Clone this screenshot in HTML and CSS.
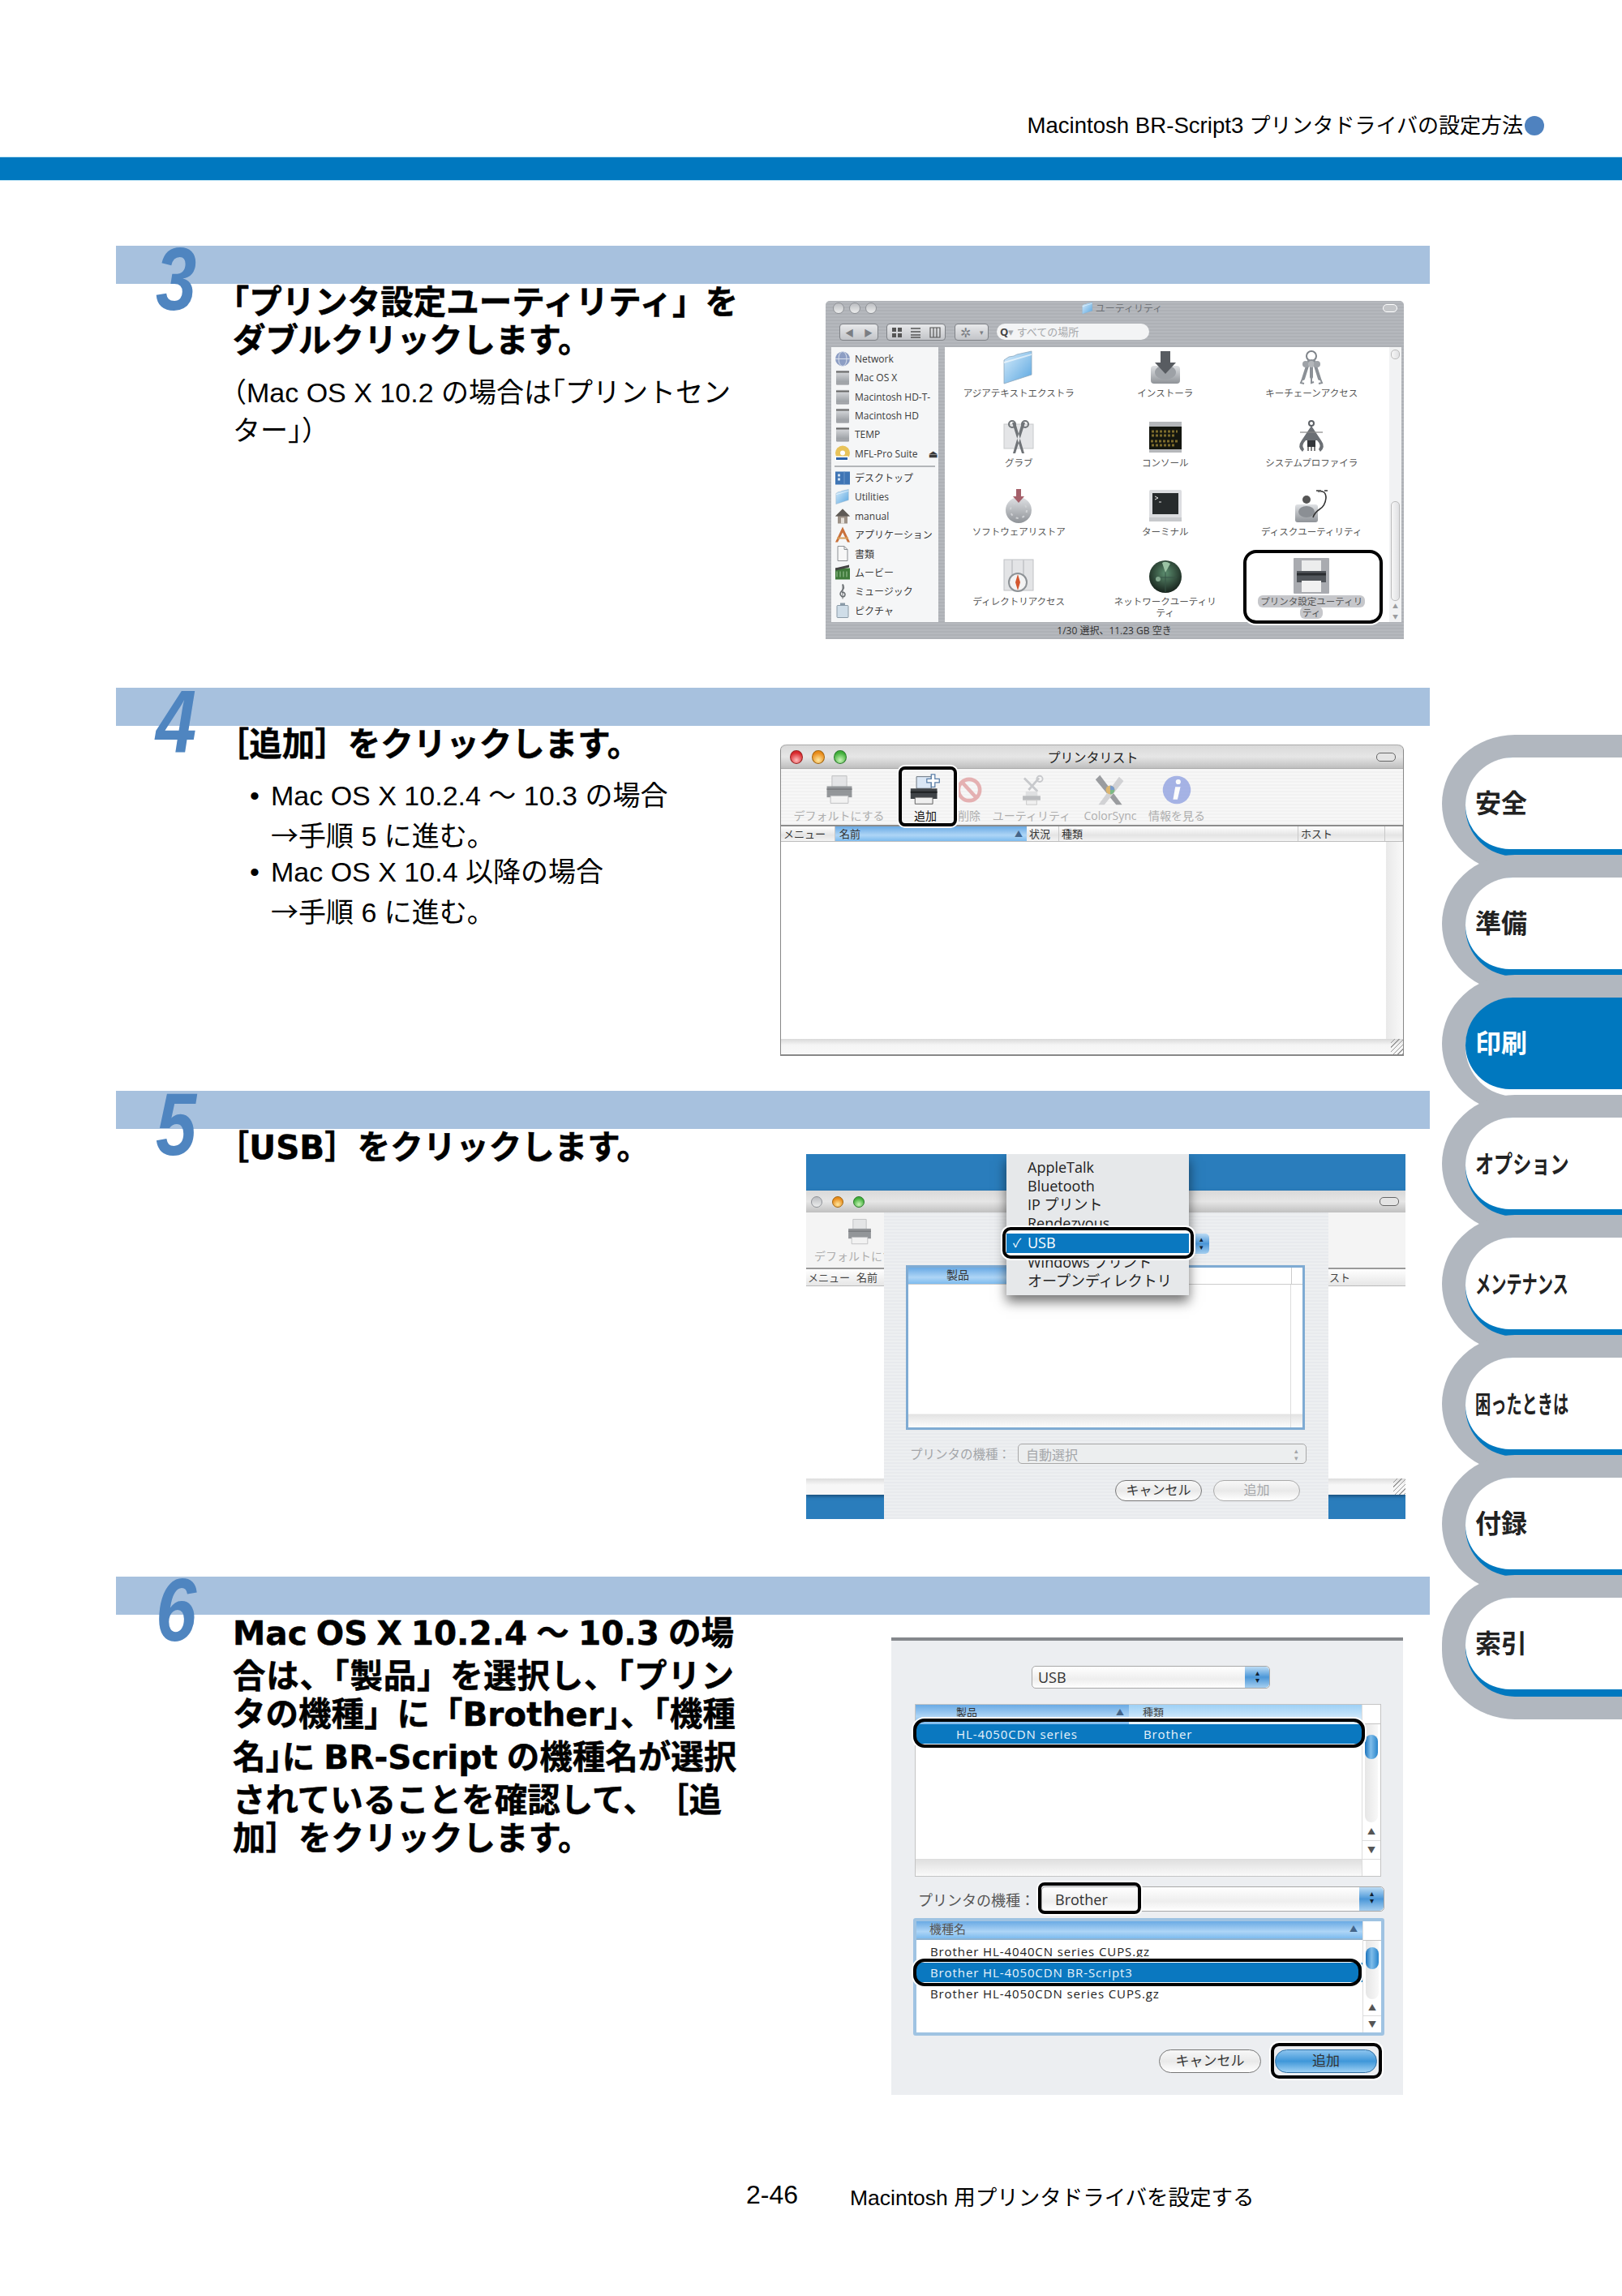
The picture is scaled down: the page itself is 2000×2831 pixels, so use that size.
FILE: index.html
```html
<!DOCTYPE html>
<html lang="ja">
<head>
  <meta charset="UTF-8" />
  <title>Macintosh BR-Script3 プリンタドライバの設定方法</title>
  <link rel="stylesheet" href="styles.css">
</head>
<body>

  <svg class="defs" xmlns="http://www.w3.org/2000/svg">
    <defs>
      <linearGradient id="gFolder" x1="0" y1="0" x2="1" y2="1"><stop offset="0" stop-color="#d6ecfb"/><stop offset="1" stop-color="#5aa6e0"/></linearGradient>
      <linearGradient id="gDisk" x1="0" y1="0" x2="0" y2="1"><stop offset="0" stop-color="#dfe1e4"/><stop offset="1" stop-color="#8f9398"/></linearGradient>
      <radialGradient id="gNet" cx=".5" cy=".4" r=".6"><stop offset="0" stop-color="#5d8f70"/><stop offset="1" stop-color="#17231c"/></radialGradient>

      <symbol id="ic-folder" viewBox="0 0 44 44"><path d="M4 13L10 9 16 8 20 6 38 2V31L4 42Z" fill="url(#gFolder)" stroke="#8aa6bd" stroke-width=".8"/><path d="M4 15L38 5V7L4 17Z" fill="#fff" opacity=".6"/></symbol>
      <symbol id="ic-install" viewBox="0 0 44 44"><rect x="4" y="20" width="36" height="22" rx="4" fill="url(#gDisk)"/><ellipse cx="22" cy="28" rx="13" ry="9" fill="#9da1a6"/><path d="M16 2H28V16H35L22 30 9 16H16Z" fill="#585c61"/></symbol>
      <symbol id="ic-keys" viewBox="0 0 44 44"><circle cx="22" cy="8" r="6" fill="none" stroke="#7d8288" stroke-width="2"/><path d="M19 14L12 36M22 14V34M25 14L32 36" stroke="#8b9096" stroke-width="4" stroke-linecap="round"/><circle cx="15" cy="18" r="4" fill="#9ea2a7"/><circle cx="22" cy="18" r="4" fill="#b3b6ba"/><circle cx="29" cy="18" r="4" fill="#9ea2a7"/><path d="M11 36l-2 5 4 1M22 34v7l3-1M33 36l2 5-4 1" fill="none" stroke="#8b9096" stroke-width="2"/></symbol>
      <symbol id="ic-grab" viewBox="0 0 44 44"><rect x="4" y="6" width="36" height="30" fill="#e4e5e7" stroke="#c8cacc"/><path d="M14 4L26 42 29 42 18 4ZM30 4L18 42 15 42 26 4Z" fill="#6f7377"/><circle cx="14" cy="6" r="4" fill="none" stroke="#6f7377" stroke-width="2"/><circle cx="30" cy="6" r="4" fill="none" stroke="#6f7377" stroke-width="2"/></symbol>
      <symbol id="ic-console" viewBox="0 0 44 44"><rect x="2" y="3" width="40" height="38" fill="#b5b7ba"/><rect x="2" y="9" width="40" height="28" fill="#14160f"/><path d="M5 15h32M5 20h30M4 27h35M5 32h28" stroke="#7c6b2c" stroke-width="3" stroke-dasharray="3 2"/></symbol>
      <symbol id="ic-sysprof" viewBox="0 0 44 44"><path d="M22 8L34 26Q40 34 33 40L31 37Q35 32 29 26H15Q9 32 13 37L11 40Q4 34 10 26Z" fill="#6b6f74"/><circle cx="22" cy="5" r="3" fill="none" stroke="#5c6065" stroke-width="2"/><rect x="17" y="26" width="10" height="8" fill="#33363a"/><path d="M18 34v5M22 34v5M26 34v5" stroke="#555" stroke-width="1.5"/><path d="M8 16H36" stroke="#888" stroke-width="1.2"/></symbol>
      <symbol id="ic-update" viewBox="0 0 44 44"><circle cx="22" cy="27" r="16" fill="url(#gDisk)"/><circle cx="22" cy="27" r="10" fill="none" stroke="#cfd1d4" stroke-dasharray="3 5" stroke-width="2"/><path d="M19 1H25V10H29L22 18 15 10H19Z" fill="#a5606a"/></symbol>
      <symbol id="ic-term" viewBox="0 0 44 44"><rect x="2" y="2" width="40" height="38" rx="2" fill="#dcdde0"/><rect x="6" y="6" width="32" height="26" fill="#272b2c"/><path d="M9 10l4 2-4 2M14 17h3" stroke="#e6e6e6" fill="none"/><rect x="2" y="36" width="40" height="5" fill="#c7c9cc"/></symbol>
      <symbol id="ic-disk" viewBox="0 0 44 44"><rect x="2" y="20" width="28" height="22" rx="3" fill="url(#gDisk)"/><ellipse cx="16" cy="29" rx="10" ry="7" fill="#8b8f94"/><circle cx="16" cy="14" r="5" fill="#555"/><path d="M30 4Q40 2 40 12 39 22 32 26 26 30 24 36" fill="none" stroke="#333" stroke-width="1.6"/><path d="M28 3l6 0M38 3l4 0" stroke="#666" stroke-width="2"/></symbol>
      <symbol id="ic-dir" viewBox="0 0 44 44"><rect x="4" y="2" width="36" height="38" fill="#e3e4e6" stroke="#c0c2c5"/><path d="M14 2V40M28 2V40" stroke="#c9cbce" stroke-width="2"/><circle cx="21" cy="30" r="11" fill="#f3f3f3" stroke="#8d9296" stroke-width="2"/><path d="M21 20L24 30 21 40 18 30Z" fill="#d4572f"/></symbol>
      <symbol id="ic-net" viewBox="0 0 44 44"><circle cx="22" cy="23" r="20" fill="url(#gNet)"/><path d="M8 24L36 24M22 4V42" stroke="#375546" stroke-width="1"/><path d="M18 6Q22 3 28 7L22 18Z" fill="#9bc3a4"/><circle cx="13" cy="26" r="3" fill="#82a68d"/></symbol>
      <symbol id="ic-print" viewBox="0 0 44 44"><rect x="0" y="0" width="44" height="44" rx="1" fill="#a9abb0"/><path d="M10 3H34V16H10Z" fill="#eceded"/><path d="M4 16H40V30H4Z" fill="#52565b"/><path d="M4 20H40" stroke="#2a2d30" stroke-width="3"/><path d="M10 28H34V42H10Z" fill="#f1f1f1"/></symbol>
      <symbol id="ic-printer" viewBox="0 0 44 44"><path d="M12 3H32V18H12Z" fill="#dfe0e2" stroke="#a8a9ac"/><path d="M5 17H39V32H5Z" fill="#73777b"/><path d="M5 21H39" stroke="#55585c" stroke-width="2"/><path d="M10 30H34V40H10Z" fill="#f2f2f2" stroke="#a8a9ac"/></symbol>
      <symbol id="ic-printadd" viewBox="0 0 44 44"><path d="M10 4H30V20H10Z" fill="#dbe7f5" stroke="#5f6a75"/><path d="M2 20H38V34H2Z" fill="#3f4347"/><path d="M2 25H38" stroke="#1e2022" stroke-width="2"/><path d="M8 32H32V41H8Z" fill="#efefef" stroke="#555"/><path d="M30 1H35V7H41V12H35V18H30V12H24V7H30Z" fill="#fff" stroke="#5b7fa8" stroke-width="1.4"/></symbol>
      <symbol id="ic-stop" viewBox="0 0 44 44"><circle cx="22" cy="22" r="17" fill="none" stroke="#e09a9c" stroke-width="6"/><path d="M11 10L33 34" stroke="#e09a9c" stroke-width="6"/></symbol>
      <symbol id="ic-util" viewBox="0 0 44 44"><path d="M12 6L30 24M32 6L18 22" stroke="#b9bbbf" stroke-width="3"/><circle cx="33" cy="7" r="4" fill="none" stroke="#b9bbbf" stroke-width="2"/><path d="M14 24H30V32H14Z" fill="#d8d9db"/><path d="M10 30H34V36H10Z" fill="#a9abae"/><path d="M15 36H29V42H15Z" fill="#eeeeee" stroke="#bbb"/></symbol>
      <symbol id="ic-color" viewBox="0 0 44 44"><path d="M8 2L38 42H30L2 8Z" fill="#7d8084"/><path d="M34 4L6 42H14L40 10Z" fill="#c6c7ca"/><circle cx="22" cy="22" r="6" fill="#d3a247"/><path d="M22 16a6 6 0 0 1 6 6h-6Z" fill="#4f7fc0"/><path d="M22 22h6a6 6 0 0 1-6 6Z" fill="#54a765"/></symbol>
      <symbol id="ic-info" viewBox="0 0 44 44"><circle cx="22" cy="22" r="19" fill="#8b9de0"/><circle cx="24" cy="11" r="3.4" fill="#fff"/><path d="M20 18H27L23 35H17Z" fill="#fff"/></symbol>
      <symbol id="ic-globe" viewBox="0 0 20 20"><circle cx="10" cy="10" r="9" fill="#8d9ec4"/><ellipse cx="10" cy="10" rx="5" ry="9" fill="none" stroke="#d8dfec"/><path d="M1 10H19" stroke="#d8dfec"/></symbol>
      <symbol id="ic-hd" viewBox="0 0 20 20"><rect x="2" y="1" width="16" height="18" rx="1" fill="url(#gDisk)"/><rect x="2" y="2" width="16" height="2" fill="#666"/><rect x="2" y="16" width="16" height="2" fill="#a5a8ac"/></symbol>
      <symbol id="ic-disc" viewBox="0 0 20 20"><circle cx="10" cy="9" r="9" fill="#e8c35a"/><circle cx="10" cy="9" r="3" fill="#fff"/><rect x="1" y="13" width="16" height="6" fill="#fff"/><path d="M2 16H16" stroke="#2d62a8" stroke-width="3"/></symbol>
      <symbol id="ic-desk" viewBox="0 0 20 20"><rect x="1" y="2" width="18" height="16" fill="#3f75b5"/><path d="M4 5h3v3H4zM4 10h3v3H4z" fill="#cfe0f3"/><path d="M12 2v16" stroke="#6d97c8"/></symbol>
      <symbol id="ic-home" viewBox="0 0 20 20"><path d="M10 1L19 10H16V19H4V10H1Z" fill="#9c9187"/><path d="M10 1L19 10H1Z" fill="#5e5a56"/><rect x="8" y="12" width="4" height="7" fill="#e4dfd8"/></symbol>
      <symbol id="ic-app" viewBox="0 0 20 20"><path d="M10 0L19 19H16L10 7 4 19H1Z" fill="#c9703a"/><path d="M3 14H17" stroke="#d8a05c" stroke-width="2"/></symbol>
      <symbol id="ic-doc" viewBox="0 0 20 20"><path d="M4 1H12L16 5V19H4Z" fill="#f7f7f7" stroke="#8c8f93"/><path d="M12 1V5H16" fill="none" stroke="#8c8f93"/></symbol>
      <symbol id="ic-movie" viewBox="0 0 20 20"><rect x="1" y="5" width="18" height="14" fill="#3f7a3a"/><path d="M1 5L18 1V4L1 8Z" fill="#444"/><path d="M3 9v7M7 9v7M11 9v7M15 9v7" stroke="#a0c89b"/></symbol>
      <symbol id="ic-music" viewBox="0 0 20 20"><path d="M10 1Q13 5 9 9 5 13 9 16 13 17 13 13 12 10 9 11" fill="none" stroke="#6b6f73" stroke-width="1.6"/><path d="M10 1V19" stroke="#6b6f73"/></symbol>
      <symbol id="ic-pic" viewBox="0 0 20 20"><rect x="3" y="4" width="14" height="15" rx="1" fill="#cfdde8" stroke="#8a9aa7"/><rect x="7" y="1" width="6" height="3" fill="#8a9aa7"/></symbol>
    </defs>
  </svg>

  <header class="page-head">
    <span class="head-title"><span class="lat">Macintosh BR-Script3</span> プリンタドライバの設定方法</span>
    <span class="head-dot"></span>
  </header>
  <div class="head-bar"></div>

  <main class="page-main">
    <div class="steps">

      <!-- step 3 -->
      <section class="step step-3">
        <div class="step-bar"></div>
        <div class="step-num">3</div>
        <div class="step-body">
          <div class="step-text">
            <h2 class="step-head"><span class="ln">「プリンタ設定ユーティリティ」を</span><span class="ln">ダブルクリックします。</span></h2>
            <p class="note"><span class="ln">（Mac OS X 10.2 の場合は<span class="hw">「</span>プリントセン</span><span class="ln">ター」）</span></p>
          </div>

          <div class="win finder">
            <div class="fin-title">
              <div class="lights">
                <span class="light off"></span><span class="light off"></span><span class="light off"></span>
              </div>
              <div class="fin-name"><svg class="fin-name-ic"><use href="#ic-folder"/></svg>ユーティリティ</div>
              <span class="pill"></span>
            </div>
            <div class="fin-tools">
              <div class="tbtn nav-btn"><span>◀</span><span>▶</span></div>
              <div class="tbtn view-btn">
                <svg viewBox="0 0 14 14"><path d="M1 1h5v5H1zM8 1h5v5H8zM1 8h5v5H1zM8 8h5v5H8z" fill="#555"/></svg>
                <svg viewBox="0 0 14 14"><path d="M1 2h12M1 6h12M1 10h12M1 13h12" stroke="#555" stroke-width="1.4"/></svg>
                <svg viewBox="0 0 14 14"><path d="M1 1h12v12H1zM5 1v12M9 1v12" fill="none" stroke="#555" stroke-width="1.2"/></svg>
              </div>
              <div class="tbtn act-btn"><span>✲</span><small>▾</small></div>
              <div class="search"><span class="search-q">Q</span>▾ すべての場所</div>
            </div>
            <div class="fin-body">
              <ul class="side">
                <li><svg><use href="#ic-globe"/></svg>Network</li>
                <li><svg><use href="#ic-hd"/></svg>Mac OS X</li>
                <li><svg><use href="#ic-hd"/></svg>Macintosh HD-T-</li>
                <li><svg><use href="#ic-hd"/></svg>Macintosh HD</li>
                <li><svg><use href="#ic-hd"/></svg>TEMP</li>
                <li class="side-eject"><svg><use href="#ic-disc"/></svg>MFL-Pro Suite<b>⏏</b></li>
                <li class="side-sep"></li>
                <li><svg><use href="#ic-desk"/></svg>デスクトップ</li>
                <li><svg><use href="#ic-folder"/></svg>Utilities</li>
                <li><svg><use href="#ic-home"/></svg>manual</li>
                <li><svg><use href="#ic-app"/></svg>アプリケーション</li>
                <li><svg><use href="#ic-doc"/></svg>書類</li>
                <li><svg><use href="#ic-movie"/></svg>ムービー</li>
                <li><svg><use href="#ic-music"/></svg>ミュージック</li>
                <li><svg><use href="#ic-pic"/></svg>ピクチャ</li>
              </ul>
              <div class="fin-main">
                <div class="fin-grid">
                  <div class="cell"><svg><use href="#ic-folder"/></svg><span>アジアテキストエクストラ</span></div>
                  <div class="cell"><svg><use href="#ic-install"/></svg><span>インストーラ</span></div>
                  <div class="cell"><svg><use href="#ic-keys"/></svg><span>キーチェーンアクセス</span></div>
                  <div class="cell"><svg><use href="#ic-grab"/></svg><span>グラブ</span></div>
                  <div class="cell"><svg><use href="#ic-console"/></svg><span>コンソール</span></div>
                  <div class="cell"><svg><use href="#ic-sysprof"/></svg><span>システムプロファイラ</span></div>
                  <div class="cell"><svg><use href="#ic-update"/></svg><span>ソフトウェアリストア</span></div>
                  <div class="cell"><svg><use href="#ic-term"/></svg><span>ターミナル</span></div>
                  <div class="cell"><svg><use href="#ic-disk"/></svg><span>ディスクユーティリティ</span></div>
                  <div class="cell"><svg><use href="#ic-dir"/></svg><span>ディレクトリアクセス</span></div>
                  <div class="cell"><svg><use href="#ic-net"/></svg><span>ネットワークユーティリ<br>ティ</span></div>
                  <div class="cell cell-sel"><svg><use href="#ic-print"/></svg><span class="sel-label"><em>プリンタ設定ユーティリ</em><br><em>ティ</em></span></div>
                </div>
                <div class="vscroll">
                  <i class="thumb thumb-a"></i><i class="thumb thumb-b"></i><b>▲</b><b>▼</b>
                </div>
              </div>
            </div>
            <div class="fin-status">1/30 選択、11.23 GB 空き</div>
            <div class="mark mark-printer"></div>
          </div>
        </div>
      </section>

      <!-- step 4 -->
      <section class="step step-4">
        <div class="step-bar"></div>
        <div class="step-num">4</div>
        <div class="step-body">
          <div class="step-text">
            <h2 class="step-head"><span class="ln">［追加］をクリックします。</span></h2>
            <ul class="bullets">
              <li><span class="ln">Mac OS X 10.2.4 ～ 10.3 の場合</span><span class="ln"><span class="arrow">→</span>手順 5 に進む。</span></li>
              <li><span class="ln">Mac OS X 10.4 以降の場合</span><span class="ln"><span class="arrow">→</span>手順 6 に進む。</span></li>
            </ul>
          </div>

          <div class="win plist">
            <div class="pl-title">
              <div class="lights lights-big">
                <span class="light red"></span><span class="light amber"></span><span class="light green"></span>
              </div>
              <div class="pl-name">プリンタリスト</div>
              <span class="pill"></span>
            </div>
            <div class="pl-tools">
              <div class="tool off t1"><svg><use href="#ic-printer"/></svg><span>デフォルトにする</span></div>
              <div class="tool t2"><svg><use href="#ic-printadd"/></svg><span>追加</span></div>
              <div class="tool off t3"><svg><use href="#ic-stop"/></svg><span>削除</span></div>
              <div class="tool off t4"><svg><use href="#ic-util"/></svg><span>ユーティリティ</span></div>
              <div class="tool off t5"><svg><use href="#ic-color"/></svg><span>ColorSync</span></div>
              <div class="tool off t6"><svg><use href="#ic-info"/></svg><span>情報を見る</span></div>
            </div>
            <div class="pl-head">
              <span>メニュー</span><span class="col-on">名前<b>▲</b></span><span>状況</span><span>種類</span><span>ホスト</span><span></span>
            </div>
            <div class="pl-content"><div class="pl-side"></div></div>
            <div class="pl-bottom"><span class="grip"></span></div>
            <div class="mark mark-add"></div>
          </div>
        </div>
      </section>

      <!-- step 5 -->
      <section class="step step-5">
        <div class="step-bar"></div>
        <div class="step-num">5</div>
        <div class="step-body">
          <div class="step-text">
            <h2 class="step-head"><span class="ln">［USB］をクリックします。</span></h2>
          </div>

          <div class="win usbshot">
            <div class="back-win">
              <div class="back-title">
                <div class="lights lights-back">
                  <span class="light off"></span><span class="light amber"></span><span class="light green"></span>
                </div>
                <span class="pill"></span>
              </div>
              <div class="back-tools">
                <div class="tool off back-tool"><svg><use href="#ic-printer"/></svg><span>デフォルトにする</span></div>
              </div>
              <div class="back-head"><span>メニュー</span><span>名前</span><span class="back-host">スト</span></div>
              <div class="back-content"></div>
              <div class="back-bottom"><span class="grip"></span></div>
            </div>

            <div class="sheet">
              <div class="lst lst-a">
                <div class="lst-a-head"><span class="col-on">製品</span><span></span><span></span></div>
                <div class="lst-a-body"><div class="lst-a-blank"></div></div>
              </div>
              <div class="sheet-row">
                <label class="dim-label">プリンタの機種：</label>
                <div class="select dim"><span>自動選択</span><i>▴<br>▾</i></div>
              </div>
              <div class="btn-row">
                <div class="mac-btn">キャンセル</div>
                <div class="mac-btn dim">追加</div>
              </div>
            </div>

            <div class="menu">
              <div class="menu-item">AppleTalk</div>
              <div class="menu-item">Bluetooth</div>
              <div class="menu-item">IP プリント</div>
              <div class="menu-item">Rendezvous</div>
              <div class="menu-item menu-on"><span class="check">✓</span>USB</div>
              <div class="menu-item">Windows プリント</div>
              <div class="menu-item">オープンディレクトリ</div>
              <div class="mark mark-usb"></div>
            </div>
            <div class="stepper stepper-usb">▴<br>▾</div>
          </div>
        </div>
      </section>

      <!-- step 6 -->
      <section class="step step-6">
        <div class="step-bar"></div>
        <div class="step-num">6</div>
        <div class="step-body">
          <div class="step-text">
            <h2 class="step-head">
              <span class="ln">Mac OS X 10.2.4 ～ 10.3 の場</span>
              <span class="ln gap ln-wide">合は、「製品」を選択し、「プリン</span>
              <span class="ln">タの機種」に「Brother」、「機種</span>
              <span class="ln gap">名<span class="hw">」</span>に BR-Script の機種名が選択</span>
              <span class="ln gap ln-full">されていることを確認して、［追</span>
              <span class="ln">加］をクリックします。</span>
            </h2>
          </div>

          <div class="win addshot">
            <div class="select sel-usb"><span>USB</span><i class="stepper">▴<br>▾</i></div>

            <div class="lst lst-b">
              <div class="lst-main">
                <div class="lst-head"><span class="col-on col-b">製品<b>▲</b></span><span class="col-light">種類</span></div>
                <div class="lst-row row-on"><span class="c1">HL-4050CDN series</span><span>Brother</span></div>
                <div class="lst-blank"></div>
                <div class="lst-foot"></div>
              </div>
              <div class="lst-scroll">
                <div class="scroll-corner"></div>
                <div class="scroll-track"><i class="scroll-thumb"></i></div>
                <div class="scroll-arrows"><b>▲</b><b>▼</b></div>
                <div class="scroll-corner small"></div>
              </div>
            </div>

            <div class="kind-row">
              <label class="kind-label">プリンタの機種：</label>
              <div class="select sel-kind"><span>Brother</span><i class="stepper">▴<br>▾</i></div>
            </div>

            <div class="lst lst-c">
              <div class="lst-main">
                <div class="lst-head head-c"><span class="col-on col-c">機種名<b>▲</b></span></div>
                <div class="lst-row">Brother HL-4040CN series CUPS.gz</div>
                <div class="lst-row row-on">Brother HL-4050CDN BR-Script3</div>
                <div class="lst-row">Brother HL-4050CDN series CUPS.gz</div>
              </div>
              <div class="lst-scroll">
                <div class="scroll-corner"></div>
                <div class="scroll-track"><i class="scroll-thumb thumb-c"></i></div>
                <div class="scroll-arrows"><b>▲</b><b>▼</b></div>
              </div>
            </div>

            <div class="btn-row btn-row-add">
              <div class="mac-btn">キャンセル</div>
              <div class="mac-btn primary">追加</div>
            </div>

            <div class="mark mark-row1"></div>
            <div class="mark mark-kind"></div>
            <div class="mark mark-row2"></div>
            <div class="mark mark-ok"></div>
          </div>
        </div>
      </section>
    </div>

    <nav class="rail">
      <div class="tab"><div class="tab-in"><div class="tab-face">安全</div></div></div>
      <div class="tab"><div class="tab-in"><div class="tab-face">準備</div></div></div>
      <div class="tab tab-on"><div class="tab-in"><div class="tab-face">印刷</div></div></div>
      <div class="tab"><div class="tab-in"><div class="tab-face"><span class="sq sq-5">オプション</span></div></div></div>
      <div class="tab"><div class="tab-in"><div class="tab-face"><span class="sq sq-6">メンテナンス</span></div></div></div>
      <div class="tab"><div class="tab-in"><div class="tab-face"><span class="sq sq-6">困ったときは</span></div></div></div>
      <div class="tab"><div class="tab-in"><div class="tab-face">付録</div></div></div>
      <div class="tab"><div class="tab-in"><div class="tab-face">索引</div></div></div>
    </nav>
  </main>

  <footer class="page-foot">
    <span class="page-no">2-46</span>
    <span class="page-sec">Macintosh 用プリンタドライバを設定する</span>
  </footer>

</body>
</html>
```

FILE: styles.css
```css
body {
  margin: 0;
  width: 2000px;
  height: 2831px;
  overflow: hidden;
  background: #fff;
  color: #000;
  font-family: "Liberation Sans", "Noto Sans CJK JP", sans-serif;
}

.defs {
  display: block;
  width: 0;
  height: 0;
}

/* page header */
.page-head {
  height: 194px;
  box-sizing: border-box;
  padding: 136px 96px 0 0;
  display: flex;
  justify-content: flex-end;
  gap: 2px;
  align-items: flex-start;
}

.head-title {
  font-size: 26px;
  line-height: 38px;
}

.head-title .lat {
  font-size: 27.6px;
}

.head-dot {
  width: 24px;
  height: 24px;
  margin-top: 7px;
  border-radius: 50%;
  background: #4f82bf;
}

.head-bar {
  height: 28px;
  background: #0078bf;
  box-shadow: 0 -1px 0 #bde3f5, 0 1px 0 #bde3f5;
}

.page-main {
  display: flex;
  align-items: flex-start;
  padding-top: 81px;
}

.steps {
  width: 1620px;
  margin-left: 143px;
  flex: none;
}

/* steps */
.step {
  position: relative;
}

.step-3 { height: 545px; }
.step-4 { height: 497px; }
.step-5 { height: 599px; }
.step-6 { height: 741px; }

.step-bar {
  height: 47px;
  background: #a7c1de;
}

.step-num {
  position: absolute;
  left: 49px;
  top: -14px;
  font: italic bold 110px/110px "Liberation Sans", sans-serif;
  color: #4f85c0;
  transform: scaleX(.82);
  transform-origin: 0 50%;
}

.step-body {
  display: flex;
  justify-content: space-between;
  align-items: flex-start;
  padding: 0 32px 0 144px;
}

.step-text {
  flex: none;
}

.step-head {
  margin: 0;
  font-family: "DejaVu Sans", "Noto Sans CJK JP", sans-serif;
  font-size: 40.5px;
  font-weight: 700;
  line-height: 47px;
  word-spacing: -3px;
  -webkit-text-stroke: .5px #000;
  white-space: nowrap;
}

.ln {
  display: block;
  height: 47px;
  white-space: nowrap;
  text-spacing-trim: trim-start;
}

.ln.gap {
  margin-top: 6px;
}

.ln-wide {
  letter-spacing: .7px;
}

.ln-full {
  text-spacing-trim: space-all;
}

.hw {
  font-feature-settings: "halt";
}

.arrow {
  font-family: "Noto Sans CJK JP", sans-serif;
}

.note {
  margin: 17px 0 0;
  font-size: 34px;
  line-height: 47px;
}

.bullets {
  list-style: none;
  margin: 16px 0 0;
  padding: 0 0 0 47px;
  font-size: 34px;
  line-height: 47px;
}

.bullets li {
  position: relative;
}

.bullets li::before {
  content: "•";
  position: absolute;
  left: -26px;
}

/* screenshots */
.win {
  position: relative;
  flex: none;
  font-family: "Open Sans", "Noto Sans CJK JP", sans-serif;
  color: #333;
}

.win svg {
  display: block;
}

.mark {
  position: absolute;
  box-sizing: border-box;
  border: 4px solid #000;
  border-radius: 12px;
  box-shadow: 0 0 0 2px #fff;
}

.lights {
  display: flex;
  gap: 6px;
}

.light {
  width: 14px;
  height: 14px;
  border-radius: 50%;
  box-sizing: border-box;
  background: linear-gradient(#bbbdc1, #eceded);
  border: 1px solid #8f9297;
}

.light.red { background: radial-gradient(circle at 50% 75%, #fbb, #d8262b 70%); border-color: #922; }
.light.amber { background: radial-gradient(circle at 50% 75%, #ffe8a0, #e88a18 70%); border-color: #a2660f; }
.light.green { background: radial-gradient(circle at 50% 75%, #c9f5b8, #3fae38 70%); border-color: #2a7a2b; }

.lights-big { gap: 11px; }
.lights-big .light { width: 16px; height: 17px; }

.pill {
  width: 18px;
  height: 10px;
  box-sizing: border-box;
  border: 1.5px solid #666;
  border-radius: 5px;
  background: #e4e4e4;
}

/* step 3: finder window */
.finder {
  width: 713px;
  height: 417px;
  margin-top: 21px;
  display: flex;
  flex-direction: column;
  border-radius: 5px 5px 0 0;
  background: repeating-linear-gradient(0deg, #aeb1b6 0 2px, #b5b8bd 2px 4px);
}

.fin-title {
  height: 28px;
  flex: none;
  box-sizing: border-box;
  display: flex;
  align-items: center;
  justify-content: space-between;
  padding: 0 8px 10px 9px;
}

.fin-title .pill {
  background: #c3c5c8;
  border-color: #fff;
}

.fin-name {
  flex: 1;
  display: flex;
  justify-content: center;
  align-items: center;
  gap: 2px;
  font-size: 12px;
  color: #6d7075;
  margin-right: 20px;
}

.fin-name-ic {
  width: 16px;
  height: 18px;
}

.fin-tools {
  height: 29px;
  flex: none;
  display: flex;
  align-items: flex-start;
  padding-left: 17px;
}

.tbtn {
  height: 21px;
  box-sizing: border-box;
  border: 1px solid #7f8287;
  border-radius: 4px;
  background: linear-gradient(#e8e9eb, #c2c4c8);
  display: flex;
  align-items: center;
  justify-content: space-around;
  color: #7b7e83;
  font-size: 11px;
}

.nav-btn { width: 48px; }
.view-btn { width: 73px; margin-left: 10px; }
.view-btn svg { width: 14px; height: 14px; }
.act-btn { width: 42px; margin-left: 11px; font-size: 16px; }
.act-btn small { font-size: 9px; }

.search {
  width: 188px;
  height: 20px;
  margin-left: 10px;
  padding-left: 4px;
  box-sizing: border-box;
  border-radius: 10px;
  background: #f3f4f5;
  font-size: 13px;
  line-height: 20px;
  color: #a6a8ab;
}

.search-q {
  color: #444;
  font-weight: 700;
}

.fin-body {
  flex: 1;
  display: flex;
  padding: 0 4px 0 7px;
  min-height: 0;
}

.side {
  width: 132px;
  flex: none;
  margin: 0 8px 0 0;
  padding: 3px 0 0 0;
  list-style: none;
  background: #f5f6f7;
  font-size: 12px;
  color: #3a3a3a;
  overflow: hidden;
}

.side li {
  height: 23.3px;
  display: flex;
  align-items: center;
  gap: 5px;
  padding-left: 4px;
  white-space: nowrap;
}

.side li svg {
  width: 20px;
  height: 21px;
  flex: none;
}

.side-eject b {
  margin-left: 8px;
  font-size: 12px;
}

.side .side-sep {
  height: 2px;
  margin: 3px 4px 2px;
  padding: 0;
  background: #b4b6b9;
}

.fin-main {
  flex: 1;
  display: flex;
  background: #fff;
}

.fin-grid {
  width: 547px;
  display: grid;
  grid-template-columns: repeat(3, 180.5px);
  grid-auto-rows: 85.7px;
  padding-top: 3px;
  margin-left: 1px;
  height: 336px;
}

.cell {
  display: flex;
  flex-direction: column;
  align-items: center;
  font-size: 11.5px;
  line-height: 14px;
  color: #555;
  text-align: center;
}

.cell svg {
  width: 44px;
  height: 44px;
  margin-bottom: 3px;
  flex: none;
}

.sel-label em {
  font-style: normal;
  background: #c6c7cb;
  border-radius: 6px;
  padding: 0 3px;
}

.vscroll {
  width: 15px;
  flex: none;
  position: relative;
  display: flex;
  flex-direction: column;
  align-items: center;
  background: #f1f2f3;
  font-size: 7px;
  line-height: 13px;
  color: #9a9c9f;
}

.vscroll .thumb {
  display: block;
  width: 9px;
  border: 1px solid #bbb;
  border-radius: 5px;
  background: linear-gradient(90deg, #f6f6f6, #e0e1e3);
}

.thumb-a { height: 12px; margin-top: 3px; background: #fff; }
.thumb-b { height: 140px; margin-top: 175px; }

.fin-status {
  height: 21px;
  flex: none;
  text-align: center;
  font-size: 12px;
  line-height: 21px;
  color: #333;
  padding-right: 1px;
}

.mark-printer {
  left: 515px;
  top: 307px;
  width: 172px;
  height: 91px;
  border-radius: 16px;
}

/* step 4: printer list */
.plist {
  width: 769px;
  height: 384px;
  margin-top: 23px;
  display: flex;
  flex-direction: column;
  box-sizing: border-box;
  border: 1px solid #888;
  border-top: none;
  border-radius: 7px 7px 0 0;
  background: #fff;
}

.pl-title {
  height: 29px;
  flex: none;
  display: flex;
  align-items: center;
  padding: 0 9px 0 11px;
  background: linear-gradient(#d9d9d9, #e6e6e6 50%, #bfbfbf);
  border-top: 1px solid #aaa;
  border-radius: 7px 7px 0 0;
  box-sizing: border-box;
}

.pl-title .pill {
  width: 24px;
  height: 11px;
  margin-left: 46px;
}

.pl-name {
  flex: 1;
  text-align: center;
  font-size: 16px;
  color: #222;
}

.pl-tools {
  height: 70px;
  flex: none;
  display: grid;
  grid-template-columns: 143px 70px 38px 116px 78px 86px;
  background: repeating-linear-gradient(0deg, #f2f2f2 0 2px, #f7f7f7 2px 4px);
  border-top: 1px solid #a9a9a9;
  box-sizing: border-box;
}

.tool {
  display: flex;
  flex-direction: column;
  align-items: center;
  padding-top: 6px;
  font-size: 14px;
  line-height: 20px;
  color: #111;
  white-space: nowrap;
}

.tool svg {
  width: 40px;
  height: 40px;
  margin-bottom: 2px;
  flex: none;
}

.tool.off {
  color: #aeaeae;
}

.tool.off svg {
  opacity: .75;
}

.t3 svg {
  width: 34px;
}

.pl-head {
  height: 21px;
  flex: none;
  display: grid;
  grid-template-columns: 67px 236px 40px 295px 107px 1fr;
  border-top: 2px solid #8c8c8c;
  border-bottom: 1px solid #bdbdbd;
  background: linear-gradient(#fff, #e4e4e4 60%, #f4f4f4);
  box-sizing: border-box;
  font-size: 13px;
  line-height: 18px;
}

.pl-head span {
  padding-left: 3px;
  border-right: 1px solid #c9c9c9;
  white-space: nowrap;
  overflow: hidden;
}

.col-on {
  background: linear-gradient(#6aaae4, #aed5f6 60%, #7dbbee);
  color: #333;
}

.pl-head .col-on {
  display: flex;
  justify-content: space-between;
  padding: 0 5px;
  border-right: none;
}

.col-on b {
  font-size: 10px;
  font-weight: 400;
  color: #44658a;
}

.pl-content {
  flex: 1;
  display: flex;
  justify-content: flex-end;
}

.pl-side {
  width: 21px;
  background: linear-gradient(90deg, #e9e9e9, #f9f9f9);
}

.pl-bottom {
  height: 20px;
  flex: none;
  display: flex;
  justify-content: flex-end;
  background: linear-gradient(#d9d9d9, #f5f5f5 40%, #f8f8f8);
  border-bottom: 1px solid #888;
  box-sizing: border-box;
}

.grip {
  width: 15px;
  align-self: stretch;
  background: repeating-linear-gradient(135deg, transparent 0 3px, #999 3px 4px);
}

.mark-add {
  left: 145px;
  top: 27px;
  width: 72px;
  height: 74px;
  border-radius: 8px;
}

/* step 5: usb menu */
.usbshot {
  width: 739px;
  height: 450px;
  margin-top: 31px;
  margin-right: -2px;
  background: #2a7dbc;
  overflow: hidden;
}

.back-win {
  margin-top: 45px;
  height: 375px;
  display: flex;
  flex-direction: column;
  background: #fff;
  box-shadow: 0 2px 4px #1b4e78;
}

.back-title {
  height: 27px;
  flex: none;
  display: flex;
  align-items: center;
  justify-content: space-between;
  padding: 0 8px 0 6px;
  background: linear-gradient(#d9d9d9, #e6e6e6 50%, #c0c0c0);
}

.lights-back { gap: 12px; }

.back-title .pill {
  width: 24px;
  height: 11px;
}

.back-tools {
  height: 70px;
  flex: none;
  box-sizing: border-box;
  border-bottom: 2px solid #9a9a9a;
  background: #f4f4f4;
}

.back-tool {
  width: 132px;
  overflow: hidden;
}

.back-tool svg {
  width: 36px;
  height: 36px;
}

.back-head {
  height: 20px;
  flex: none;
  display: flex;
  background: linear-gradient(#fff, #e6e6e6);
  border-bottom: 1px solid #bbb;
  font-size: 13px;
  line-height: 20px;
}

.back-head span {
  padding-left: 2px;
  width: 58px;
  white-space: nowrap;
  color: #444;
}

.back-head .back-host {
  margin-left: 523px;
}

.back-content {
  flex: 1;
}

.back-bottom {
  height: 20px;
  flex: none;
  display: flex;
  justify-content: flex-end;
  background: linear-gradient(#ddd, #f7f7f7 40%);
}

.sheet {
  position: absolute;
  left: 96px;
  top: 72px;
  bottom: 0;
  width: 548px;
  box-sizing: border-box;
  padding: 65px 0 0 27px;
  background: repeating-linear-gradient(0deg, #e8eaed 0 2px, #edeff1 2px 4px);
  display: flex;
  flex-direction: column;
}

.lst {
  box-sizing: border-box;
  background: #fff;
}

.lst-a {
  width: 492px;
  height: 203px;
  flex: none;
  border: 3px solid #7fabd3;
  display: flex;
  flex-direction: column;
}

.lst-a-head {
  height: 20px;
  flex: none;
  display: grid;
  grid-template-columns: 300px 172px 1fr;
  font-size: 14px;
  line-height: 18px;
  border-bottom: 1px solid #ccc;
}

.lst-a-head .col-on {
  padding-left: 47px;
}

.lst-a-head span:last-child {
  border-left: 1px solid #ccc;
}

.lst-a-body {
  flex: 1;
  display: flex;
  background: linear-gradient(#fff, #fff 159px, #e3e3e3 160px, #fff 178px);
}

.lst-a-blank {
  width: 471px;
  border-right: 1px solid #ddd;
  background: linear-gradient(#fff, #fff 159px, #e3e3e3 160px, #fff 178px);
}

.sheet-row {
  height: 25px;
  flex: none;
  margin-top: 17px;
  display: flex;
  align-items: center;
  gap: 9px;
  margin-left: 5px;
}

.dim-label {
  font-size: 15.5px;
  color: #a4a6a9;
  white-space: nowrap;
  width: 124px;
}

.select {
  position: relative;
  box-sizing: border-box;
  display: flex;
  justify-content: space-between;
  align-items: center;
  border: 1px solid #a8a8a8;
  border-radius: 5px;
  background: linear-gradient(#fff, #eee 60%, #fff);
  font-size: 18px;
}

.select i {
  font-style: normal;
  font-size: 9px;
  line-height: 9px;
  text-align: center;
}

.select.dim {
  width: 356px;
  height: 25px;
  padding: 0 9px;
  color: #a4a6a9;
  background: #eceeef;
  font-size: 16px;
}

.btn-row {
  display: flex;
  justify-content: flex-end;
  gap: 14px;
  margin-top: 20px;
  padding-right: 35px;
}

.mac-btn {
  width: 107px;
  height: 26px;
  box-sizing: border-box;
  border: 1.5px solid #777;
  border-radius: 13px;
  background: linear-gradient(#f8f8f8, #e9e9e9 50%, #fff);
  text-align: center;
  font-size: 16px;
  line-height: 22px;
  color: #333;
}

.mac-btn.dim {
  color: #a5a7aa;
  border-color: #aaa;
}

.menu {
  position: absolute;
  left: 247px;
  top: 0;
  width: 225px;
  height: 174px;
  box-sizing: border-box;
  padding-top: 5px;
  background: #e6e8ea;
  box-shadow: 0 8px 14px rgba(0, 0, 0, .55);
  font-size: 18px;
  color: #222;
  z-index: 2;
}

.menu-item {
  height: 23px;
  line-height: 23px;
  padding-left: 26px;
  white-space: nowrap;
}

.menu-on {
  position: relative;
  z-index: 2;
  height: 24px;
  margin-top: 1px;
  background: #0a78c0;
  color: #fff;
}

.check {
  position: absolute;
  left: 8px;
  font-size: 15px;
}

.mark-usb {
  left: -5px;
  top: 90px;
  width: 236px;
  height: 39px;
  background: #fff;
  z-index: 1;
  border-radius: 10px;
}

.stepper {
  box-sizing: border-box;
  color: #123;
  background: linear-gradient(#bcdcf5, #4b97d8 50%, #a6cff0);
  text-align: center;
  font-size: 9px;
  line-height: 10px;
  font-style: normal;
}

.stepper-usb {
  position: absolute;
  left: 478px;
  top: 98px;
  width: 19px;
  height: 25px;
  border-radius: 0 5px 5px 0;
  padding-top: 2px;
  z-index: 1;
}

/* step 6: add printer */
.addshot {
  width: 631px;
  height: 564px;
  margin-top: 28px;
  margin-right: 1px;
  box-sizing: border-box;
  border-top: 4px solid #85888c;
  background: #eceef1;
  padding-top: 31px;
  font-size: 15px;
}

.sel-usb {
  width: 294px;
  height: 28px;
  margin-left: 173px;
  padding-left: 7px;
}

.sel-usb .stepper,
.sel-kind .stepper {
  align-self: stretch;
  width: 30px;
  padding-top: 3px;
  border-radius: 0 5px 5px 0;
  line-height: 9px;
  font-size: 10px;
}

.lst-b,
.lst-c {
  display: flex;
}

.lst-b {
  width: 575px;
  height: 213px;
  margin: 19px 0 0 29px;
  border: 1px solid #c4c4c4;
}

.lst-main {
  flex: 1;
  display: flex;
  flex-direction: column;
  min-width: 0;
}

.lst-head {
  height: 24px;
  flex: none;
  display: grid;
  grid-template-columns: 263px 1fr;
  font-size: 13px;
  line-height: 18px;
  color: #444;
}

.col-b {
  display: flex;
  justify-content: space-between;
  padding: 0 6px 0 50px;
}

.col-light {
  padding-left: 17px;
  background: linear-gradient(#9dd0f5, #e7f4fd);
}

.lst-row {
  height: 24px;
  flex: none;
  display: flex;
  padding-left: 20px;
  font-size: 15px;
  line-height: 24px;
  letter-spacing: .9px;
  color: #222;
  white-space: nowrap;
}

.row-on {
  background: #0a78c0;
  color: #e8f3fb;
}

.lst-b .lst-row {
  padding-left: 50px;
}

.lst-b .c1 {
  width: 231px;
}

.lst-blank {
  flex: 1;
}

.lst-foot {
  height: 21px;
  flex: none;
  background: linear-gradient(#dedede, #fafafa);
}

.lst-scroll {
  width: 22px;
  flex: none;
  display: flex;
  flex-direction: column;
  align-items: center;
  border-left: 1px solid #ddd;
  background: #fff;
}

.scroll-corner {
  height: 24px;
  width: 100%;
  border-bottom: 1px solid #c4c4c4;
  flex: none;
  box-sizing: border-box;
}

.scroll-corner.small {
  height: 21px;
  border-bottom: none;
  border-top: 1px solid #ddd;
}

.scroll-track {
  flex: 1;
  width: 16px;
  padding-top: 13px;
  background: linear-gradient(90deg, #e6e6e6, #f8f8f8);
  border-radius: 0 0 8px 8px;
  box-sizing: border-box;
}

.scroll-thumb {
  display: block;
  height: 30px;
  border-radius: 8px;
  background: linear-gradient(90deg, #1c74bd, #7fbdea 45%, #2a85cb);
}

.thumb-c {
  height: 27px;
  margin-top: -5px;
}

.scroll-arrows {
  flex: none;
  width: 100%;
  display: flex;
  flex-direction: column;
  font-size: 10px;
  text-align: center;
  color: #555;
}

.scroll-arrows b {
  height: 22px;
  line-height: 22px;
  font-weight: 400;
}

.scroll-arrows b + b {
  border-top: 1px solid #ddd;
}

.kind-row {
  height: 31px;
  margin: 12px 0 0 33px;
  display: flex;
  align-items: center;
  gap: 9px;
}

.kind-label {
  font-size: 18px;
  color: #555;
  width: 143px;
  white-space: nowrap;
}

.sel-kind {
  width: 423px;
  height: 31px;
  padding-left: 16px;
}

.lst-c {
  width: 581px;
  height: 145px;
  margin: 8px 0 0 27px;
  border: 4px solid #9fc3e2;
  border-radius: 3px;
}

.head-c {
  display: block;
  height: 23px;
  border-bottom: 2px solid #8fb2d0;
  box-sizing: border-box;
}

.col-c {
  display: flex;
  justify-content: space-between;
  height: 100%;
  padding: 0 6px 0 16px;
  font-size: 15px;
  color: #555;
}

.lst-c .scroll-arrows b {
  height: 20px;
  line-height: 20px;
}

.lst-c .lst-row {
  padding-left: 17px;
  height: 24px;
  margin-top: 2px;
}

.btn-row-add {
  gap: 17px;
  margin-top: 17px;
  padding-right: 32px;
}

.btn-row-add .mac-btn {
  width: 126px;
  height: 29px;
  border-radius: 15px;
  line-height: 25px;
  font-size: 17px;
}

.mac-btn.primary {
  background: linear-gradient(#8cc4ee, #3f97d9 50%, #9ed0f3);
  border-color: #2f6fa3;
}

.mark-row1 {
  left: 27px;
  top: 96px;
  width: 557px;
  height: 36px;
  border-radius: 14px;
}

.mark-kind {
  left: 181px;
  top: 298px;
  width: 127px;
  height: 39px;
  border-radius: 8px;
}

.mark-row2 {
  left: 27px;
  top: 392px;
  width: 553px;
  height: 34px;
  border-radius: 14px;
}

.mark-ok {
  left: 468px;
  top: 496px;
  width: 137px;
  height: 44px;
  border-radius: 10px;
}

/* right side tabs */
.rail {
  width: 222px;
  margin: 603px 0 0 15px;
  flex: none;
  display: flex;
  flex-direction: column;
}

.tab {
  height: 170px;
  margin-bottom: -22px;
  box-sizing: border-box;
  padding: 28px 0 0 29px;
  background: #b1b7bf;
  border-radius: 90px 0 0 90px / 85px 0 0 85px;
}

.tab:last-child {
  height: 178px;
}

.tab-in {
  height: 122px;
  background: #0078bf;
  border-radius: 62px 0 0 62px;
}

.tab-face {
  height: 113px;
  box-sizing: border-box;
  padding: 26px 0 0 12px;
  background: #fff;
  border-radius: 60px 0 0 56px;
  font-size: 32px;
  line-height: 56px;
  font-weight: 700;
  font-family: "Noto Sans CJK JP", sans-serif;
  color: #222;
  white-space: nowrap;
}

.tab-on .tab-in {
  background: #fff;
}

.tab-on .tab-face {
  background: #0078bf;
  color: #fff;
}

.sq {
  display: inline-block;
  font-size: 30px;
  transform-origin: 0 50%;
}

.sq-5 { transform: scaleX(.77); }
.sq-6 { transform: scaleX(.64); }

/* page footer */
.page-foot {
  display: flex;
  align-items: center;
  height: 42px;
  padding-left: 920px;
}

.page-no {
  width: 128px;
  font-size: 32px;
}

.page-sec {
  font-size: 26.5px;
  padding-top: 3px;
}
```
